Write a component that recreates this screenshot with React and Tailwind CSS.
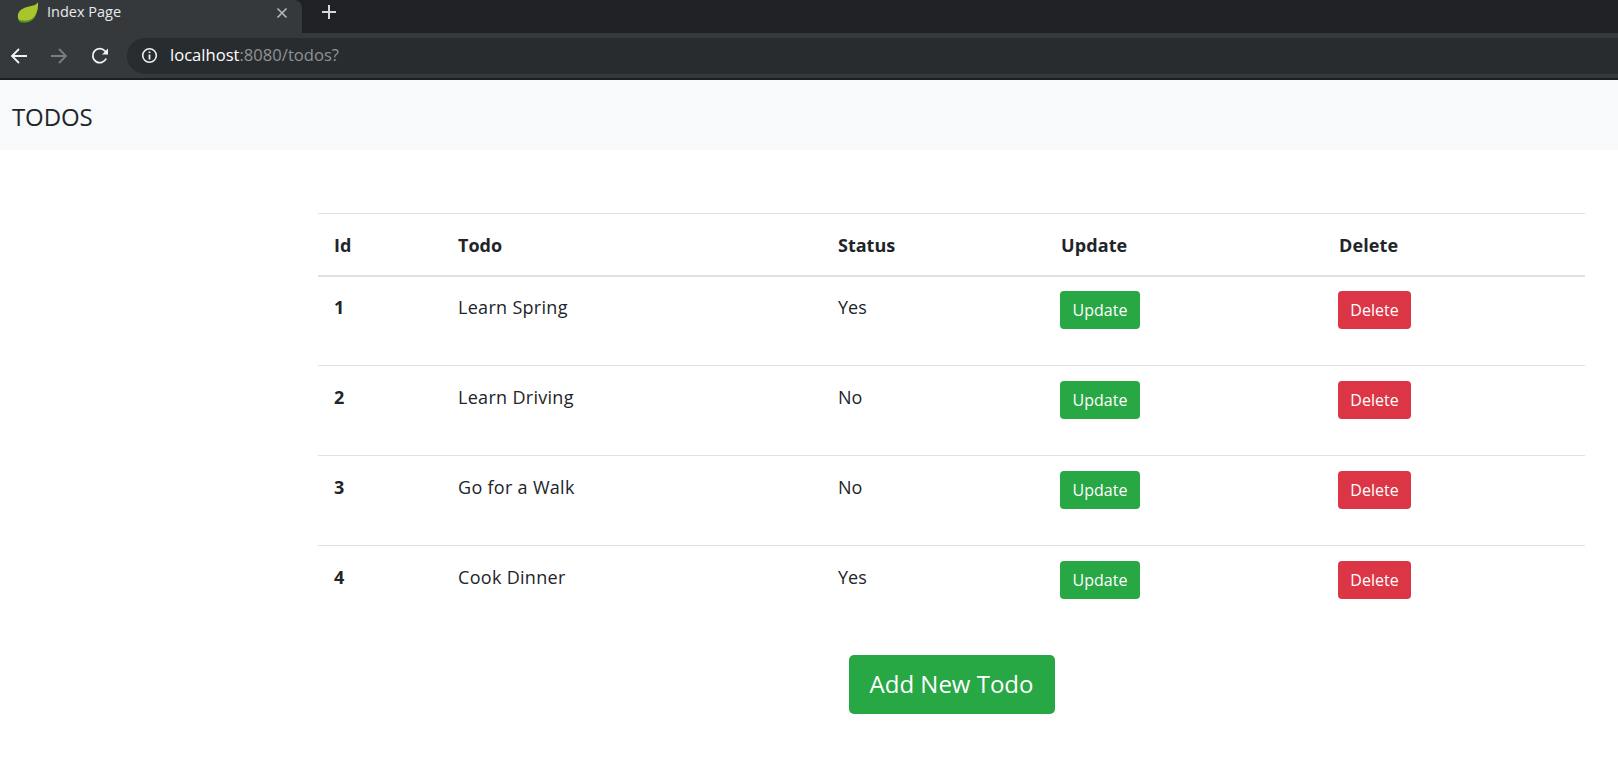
import React from 'react';

const rows = [
  { id: 1, todo: 'Learn Spring', status: 'Yes' },
  { id: 2, todo: 'Learn Driving', status: 'No' },
  { id: 3, todo: 'Go for a Walk', status: 'No' },
  { id: 4, todo: 'Cook Dinner', status: 'Yes' },
];

const Leaf = () => (
  <svg width="22" height="21" viewBox="0 0 21 20">
    <path d="M20 0.5C18.5 3 15.500 3.500 12 4.200C5.500 5.500 1 8.500 0.800 13.500C0.700 15.500 1.500 17.500 2.500 19C6 20.500 13 20 16.500 15.500C19 12 20.500 5.500 20 0.500Z" fill="#4f8f2f" />
    <path d="M20 0.5C18.5 3 15.500 3.500 12 4.200C5.500 5.500 1 8.500 0.800 13C0.800 14.500 1.200 15.800 1.800 17C6 18.500 13 18 16 14.500C18.800 11 20.500 5.500 20 0.500Z" fill="#a8c62c" />
  </svg>
);

const BrowserChrome = () => (
  <div className="bg-[#35393c] h-[80px] border-b-2 border-[#1d1e20] shrink-0">
    <div className="h-[33px] bg-[#202124] flex items-stretch">
      <div className="w-[302px] bg-[#35393c] rounded-tr-lg flex items-center pl-[17px] pr-[14px] pb-2">
        <Leaf />
        <span className="ml-[8px] text-[14.500px] text-[#e8eaed] leading-none">Index Page</span>
        <svg className="ml-auto" width="12" height="12" viewBox="0 0 12 12" stroke="#b6b9bc" strokeWidth="1.600">
          <path d="M1.500 1.500L10.500 10.500M10.500 1.500L1.500 10.500" />
        </svg>
      </div>
      <svg className="ml-[19px] mt-[4px]" width="16" height="16" viewBox="0 0 16 16" stroke="#d5d7d9" strokeWidth="2">
        <path d="M8 1V15M1 8H15" />
      </svg>
    </div>
    <div className="h-[45px] flex items-center pl-[10px]">
      <svg width="18" height="18" viewBox="0 0 18 18" fill="none" stroke="#f1f3f4" strokeWidth="1.800">
        <path d="M17 9H2M9 2L2 9L9 16" />
      </svg>
      <svg className="ml-[22px]" width="18" height="18" viewBox="0 0 18 18" fill="none" stroke="#7b7e81" strokeWidth="1.800">
        <path d="M1 9H16M9 2L16 9L9 16" />
      </svg>
      <svg className="ml-[23px]" width="18" height="18" viewBox="0 0 18 18" fill="none" stroke="#f1f3f4" strokeWidth="1.800">
        <path d="M15.200 11.500A7 7 0 1 1 14 4L16.500 6.500" />
        <path d="M17 1.500V7.500H11" fill="#f1f3f4" stroke="none" />
      </svg>
      <div className="ml-[18px] flex-1 h-[36px] rounded-l-[18px] bg-[#292c2f] flex items-center pl-[14px]">
        <svg width="17" height="17" viewBox="0 0 17 17" fill="none">
          <circle cx="8.500" cy="8.500" r="6.800" stroke="#eceeef" strokeWidth="1.600" />
          <path d="M8.500 7.500V12.500M8.500 4.500V6" stroke="#eceeef" strokeWidth="1.800" />
        </svg>
        <span className="ml-[12px] text-[16.600px] leading-none">
          <span className="text-white">localhost</span>
          <span className="text-[#8f9295]">:8080/todos?</span>
        </span>
      </div>
    </div>
  </div>
);

const TableButton = ({ color, width, children }) => (
  <button className={`${color} ${width} h-[38px] rounded text-white text-[16px] leading-none`}>{children}</button>
);

export default function App() {
  return (
    <div className="min-h-[758px] bg-white text-[#212529] font-['Open_Sans',sans-serif] flex flex-col">
      <BrowserChrome />

      <nav className="h-[70px] bg-[#f8f9fa] flex items-center pl-3 pt-1 shrink-0">
        <span className="text-[24px] text-[#212529] tracking-[-0.1px]">TODOS</span>
      </nav>

      <main className="pl-[318px] pr-[33px] pt-[63px]">
        <table className="w-full table-fixed border-collapse text-[18px]">
          <colgroup>
            <col className="w-[124px]" />
            <col className="w-[380px]" />
            <col className="w-[223px]" />
            <col className="w-[278px]" />
            <col />
          </colgroup>
          <thead>
            <tr className="h-[62px] border-t border-b-2 border-t-[#dee2e6] border-b-[#dee2e6] text-left">
              <th className="pl-4 pt-[2px] font-bold">Id</th>
              <th className="pl-4 pt-[2px] font-bold">Todo</th>
              <th className="pl-4 pt-[2px] font-bold">Status</th>
              <th className="pl-4 pt-[2px] font-bold tracking-[0.1px]">Update</th>
              <th className="pl-4 pt-[2px] font-bold tracking-[0.1px]">Delete</th>
            </tr>
          </thead>
          <tbody>
            {rows.map((row) => {
              const textPad = row.id === 1 ? 'pt-[17px]' : 'pt-[18px]';
              const btnPad = row.id === 1 ? 'pt-[14px]' : 'pt-[15px]';
              return (
                <tr key={row.id} className="h-[90px] border-b border-[#dee2e6] last:border-b-0 align-top">
                  <th className={`pl-4 ${textPad} text-left font-bold`}>{row.id}</th>
                  <td className={`pl-4 ${textPad} tracking-[0.3px]`}>{row.todo}</td>
                  <td className={`pl-4 ${textPad}`}>{row.status}</td>
                  <td className={`pl-[15px] ${btnPad}`}>
                    <TableButton color="bg-[#28a745]" width="w-[80px]">Update</TableButton>
                  </td>
                  <td className={`pl-[15px] ${btnPad}`}>
                    <TableButton color="bg-[#dc3545]" width="w-[73px]">Delete</TableButton>
                  </td>
                </tr>
              );
            })}
          </tbody>
        </table>

        <div className="flex justify-center mt-[19px]">
          <button className="w-[206px] h-[59px] rounded-[5px] bg-[#28a745] text-white text-[24px] leading-none">
            Add New Todo
          </button>
        </div>
      </main>
    </div>
  );
}
